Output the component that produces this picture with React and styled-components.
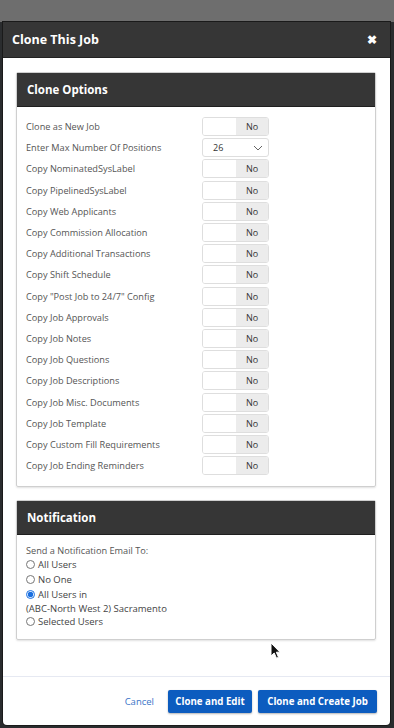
import React from "react";
import styled, { createGlobalStyle } from "styled-components";

const GlobalStyle = createGlobalStyle`
  html, body {
    margin: 0;
    padding: 0;
    background: #2a2c2e;
    font-family: "Open Sans", "Liberation Sans", sans-serif;
  }
`;

const Page = styled.div`
  position: relative;
  width: 394px;
  height: 728px;
  overflow: hidden;
  padding: 22px 4px 0 3px;
  box-sizing: border-box;
  background: linear-gradient(#6e6e6e 0, #6e6e6e 22px, #2a2c2e 22px);
`;

const Modal = styled.div`
  width: 387px;
  height: 703px;
  background: #fff;
  display: flex;
  flex-direction: column;
  border-radius: 0 0 4px 4px;
  box-shadow: 0 0 0 1px #1a1a1a;
`;

const ModalHeader = styled.div`
  height: 35px;
  flex-shrink: 0;
  background: #363636;
  display: flex;
  align-items: center;
  justify-content: space-between;
  padding: 0 13px 0 9px;
  color: #fff;
  border-bottom: 1px solid #222;
`;

const Title = styled.h1`
  margin: 0;
  font-size: 12.5px;
  font-weight: 700;
`;

const Close = styled.span`
  font-size: 12px;
  font-weight: 700;
  line-height: 1;
`;

const ModalBody = styled.div`
  flex: 1;
  padding: 14px 14px 0 13px;
  display: flex;
  flex-direction: column;
  gap: 13px;
`;

const Panel = styled.section`
  border: 1px solid #cfcfcf;
  border-radius: 2px;
  box-shadow: 0 1px 2px rgba(0, 0, 0, 0.12);
`;

const PanelHeader = styled.div`
  height: 33px;
  background: #363636;
  color: #fff;
  display: flex;
  align-items: center;
  padding-left: 10px;
  font-size: 11.5px;
  font-weight: 700;
  border-bottom: 1px solid #1f1f1f;
`;

const PanelBody = styled.div`
  padding: ${(p) => p.$pad || "9px 9px 10px 9px"};
`;

const OptionRow = styled.div`
  display: grid;
  grid-template-columns: 176px 67px;
  align-items: center;
  height: 21.2px;
`;

const Label = styled.span`
  font-size: 9.2px;
  color: #555;
  white-space: nowrap;
`;

const Toggle = styled.div`
  height: 19px;
  display: flex;
  border: 1px solid #dedede;
  border-radius: 3px;
  overflow: hidden;
  box-sizing: border-box;
`;

const ToggleOff = styled.div`
  flex: 1;
  background: #fff;
`;

const ToggleOn = styled.div`
  width: 32px;
  background: #ececec;
  color: #333;
  font-size: 9px;
  display: flex;
  align-items: center;
  justify-content: center;
`;

const Select = styled.div`
  height: 19px;
  box-sizing: border-box;
  border: 1px solid #dedede;
  border-radius: 3px;
  display: flex;
  align-items: center;
  justify-content: space-between;
  padding: 0 5px 0 10px;
  font-size: 9px;
  color: #333;
`;

const Intro = styled.div`
  font-size: 9.2px;
  color: #555;
  margin-bottom: 1px;
`;

const RadioRow = styled.label`
  display: flex;
  align-items: flex-start;
  gap: 3px;
  font-size: 9.5px;
  color: #444;
  line-height: 13.5px;
  min-height: 15px;
`;

const Radio = styled.input.attrs({ type: "radio" })`
  width: 9px;
  height: 9px;
  margin: 2px 0 0 0;
  accent-color: #1a6fe0;
`;

const Footer = styled.div`
  height: 48px;
  border-top: 1px solid #e6e9f2;
  display: flex;
  align-items: center;
  justify-content: flex-end;
  gap: 6px;
  padding-right: 13px;
`;

const LinkButton = styled.button`
  background: none;
  border: none;
  color: #3a74c8;
  font-family: inherit;
  font-size: 9.5px;
  margin-right: 8px;
  padding: 0;
`;

const Button = styled.button`
  height: 23px;
  width: ${(p) => p.$w}px;
  background: #0c5cbf;
  color: #fff;
  border: none;
  border-radius: 2px;
  font-family: inherit;
  font-size: 9.7px;
  font-weight: 700;
  box-shadow: 0 1px 2px rgba(0, 0, 0, 0.3);
`;

const Cursor = styled.svg`
  position: absolute;
  left: 270px;
  top: 642px;
`;

const options = [
  "Clone as New Job",
  "Enter Max Number Of Positions",
  "Copy NominatedSysLabel",
  "Copy PipelinedSysLabel",
  "Copy Web Applicants",
  "Copy Commission Allocation",
  "Copy Additional Transactions",
  "Copy Shift Schedule",
  'Copy "Post Job to 24/7" Config',
  "Copy Job Approvals",
  "Copy Job Notes",
  "Copy Job Questions",
  "Copy Job Descriptions",
  "Copy Job Misc. Documents",
  "Copy Job Template",
  "Copy Custom Fill Requirements",
  "Copy Job Ending Reminders",
];

export default function App() {
  return (
    <Page>
      <GlobalStyle />
      <Modal>
        <ModalHeader>
          <Title>Clone This Job</Title>
          <Close>✖</Close>
        </ModalHeader>
        <ModalBody>
          <Panel>
            <PanelHeader>Clone Options</PanelHeader>
            <PanelBody>
              {options.map((o, i) => (
                <OptionRow key={o}>
                  <Label>{o}</Label>
                  {i === 1 ? (
                    <Select>
                      <span>26</span>
                      <svg width="10" height="6" viewBox="0 0 10 6">
                        <path d="M1 1l4 4 4-4" fill="none" stroke="#666" strokeWidth="1" />
                      </svg>
                    </Select>
                  ) : (
                    <Toggle>
                      <ToggleOff />
                      <ToggleOn>No</ToggleOn>
                    </Toggle>
                  )}
                </OptionRow>
              ))}
            </PanelBody>
          </Panel>
          <Panel>
            <PanelHeader>Notification</PanelHeader>
            <PanelBody $pad="9px 9px 9px 9px">
              <Intro>Send a Notification Email To:</Intro>
              <RadioRow>
                <Radio name="n" />
                All Users
              </RadioRow>
              <RadioRow>
                <Radio name="n" />
                No One
              </RadioRow>
              <RadioRow>
                <Radio name="n" defaultChecked />
                <span>
                  All Users in
                  <br />
                  <span style={{ marginLeft: -12 }}>(ABC-North West 2) Sacramento</span>
                </span>
              </RadioRow>
              <RadioRow>
                <Radio name="n" />
                Selected Users
              </RadioRow>
            </PanelBody>
          </Panel>
        </ModalBody>
        <Footer>
          <LinkButton>Cancel</LinkButton>
          <Button $w={84}>Clone and Edit</Button>
          <Button $w={119}>Clone and Create Job</Button>
        </Footer>
      </Modal>
      <Cursor width="12" height="18" viewBox="0 0 12 18">
        <path d="M1 1v13l3.2-3 2.3 5.2 2-0.9-2.2-5.1H10z" fill="#111" stroke="#fff" strokeWidth="1" />
      </Cursor>
    </Page>
  );
}
